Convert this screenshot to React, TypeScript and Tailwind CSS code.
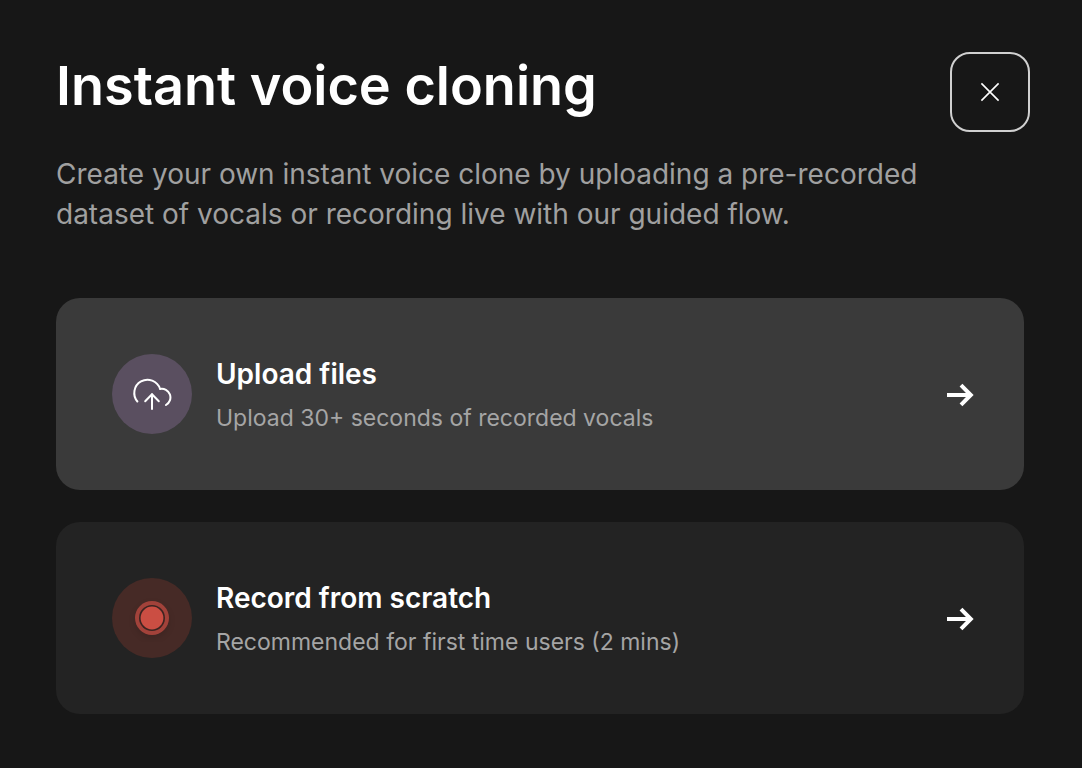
import type { ReactNode } from "react";

function ArrowRight() {
  return (
    <svg width="28" height="28" viewBox="0 0 28 28" fill="none" stroke="currentColor" strokeWidth="4" aria-hidden="true">
      <path d="M1 15H25" />
      <path d="M15 5.2L24.8 15L15 24.8" strokeLinejoin="miter" />
    </svg>
  );
}

function CloudUpload() {
  return (
    <svg width="40" height="40" viewBox="0 0 40 40" fill="none" stroke="white" strokeWidth="2" strokeLinecap="round" strokeLinejoin="round" aria-hidden="true">
      <path d="M5.4 27.5A13.2 13.2 0 1 1 28 14.8" />
      <path d="M28 14.9A8.7 8.7 0 0 1 34 31" />
      <path d="M20 35V20M13.2 27.2L20 20.2L26.8 27.2" />
    </svg>
  );
}

function RecordDot() {
  return (
    <svg width="48" height="48" viewBox="0 0 48 48" aria-hidden="true">
      <g className="drop-shadow-md">
        <circle cx="24" cy="24" r="17" fill="#a2423a" />
        <circle cx="24" cy="24" r="13" fill="#3b2421" />
        <circle cx="24" cy="24" r="11.4" fill="#cb4e43" />
      </g>
    </svg>
  );
}

type OptionProps = {
  title: string;
  detail: string;
  icon: ReactNode;
  surface: string;
  badge: string;
};

function Option({ title, detail, icon, surface, badge }: OptionProps) {
  return (
    <button type="button" className={`flex w-full items-center gap-6 rounded-3xl py-14 pr-[50px] pl-14 text-left ${surface}`}>
      <span className={`flex size-20 shrink-0 items-center justify-center rounded-full ${badge}`}>{icon}</span>
      <span className="flex min-w-0 flex-1 flex-col gap-2">
        <span className="text-[28px] leading-10 font-semibold text-white">{title}</span>
        <span className="text-[23px] leading-8 text-[#a5a5a5]">{detail}</span>
      </span>
      <ArrowRight />
    </button>
  );
}

export default function App() {
  return (
    <main className="min-h-screen bg-[#171717] pt-[52px] pr-[52px] pb-[54px] pl-14 font-['Inter',sans-serif] text-white">
      <header className="flex items-start justify-between">
        <h1 className="pt-1 text-[54px] leading-[60px] font-semibold">Instant voice cloning</h1>
        <button
          type="button"
          aria-label="Close"
          className="flex size-20 shrink-0 items-center justify-center rounded-[20px] border-2 border-[#d0d0d0]"
        >
          <svg width="20" height="20" viewBox="0 0 20 20" fill="none" stroke="white" strokeWidth="1.6" aria-hidden="true">
            <path d="M1.4 1.4L18.6 18.6M18.6 1.4L1.4 18.6" />
          </svg>
        </button>
      </header>
      <p className="mt-[22px] max-w-[880px] text-[28px] leading-10 text-[#a0a0a0]">
        Create your own instant voice clone by uploading a pre-recorded dataset of vocals or recording live with our guided flow.
      </p>
      <div className="mt-16 mr-[6px] flex flex-col gap-8">
        <Option
          title="Upload files"
          detail="Upload 30+ seconds of recorded vocals"
          icon={<CloudUpload />}
          surface="bg-[#3a3a3a]"
          badge="bg-[#5a4f60]"
        />
        <Option
          title="Record from scratch"
          detail="Recommended for first time users (2 mins)"
          icon={<RecordDot />}
          surface="bg-[#232323]"
          badge="bg-[#462a26]"
        />
      </div>
    </main>
  );
}
